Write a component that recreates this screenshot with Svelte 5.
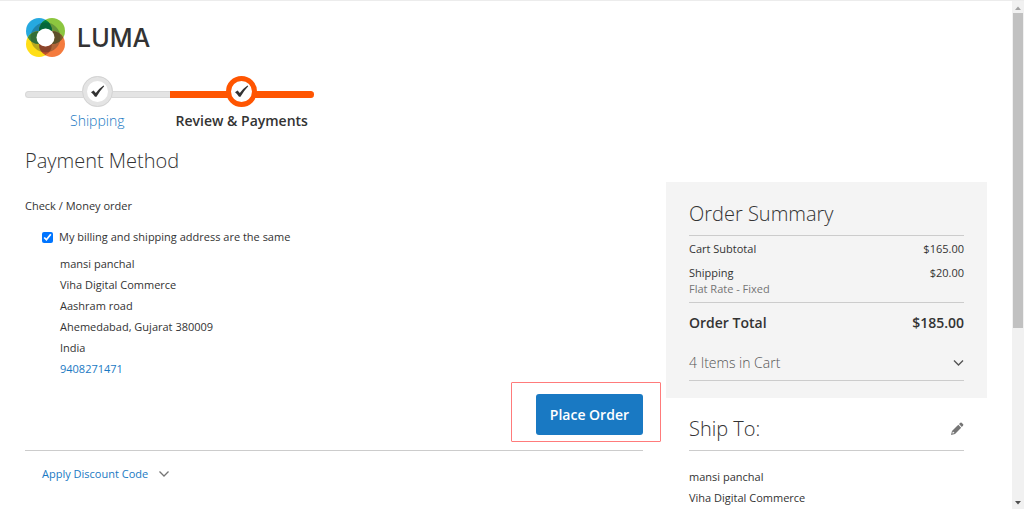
<script lang="ts">
	let sameAddress = true;

	const address = [
		'mansi panchal',
		'Viha Digital Commerce',
		'Aashram road',
		'Ahemedabad, Gujarat 380009',
		'India'
	];
	const phone = '9408271471';

	const steps = [
		{ label: 'Shipping', active: false },
		{ label: 'Review & Payments', active: true }
	];
</script>

<div class="viewport">
	<div class="page">
		<header>
			<a class="logo" href="/" aria-label="Luma">
				<svg width="40" height="40" viewBox="0 0 40 40" aria-hidden="true">
					<circle cx="14" cy="13" r="13" fill="#26a9e0" />
					<circle cx="27" cy="13" r="13" fill="#8cc63f" />
					<circle cx="27" cy="26" r="13" fill="#f47b3e" />
					<circle cx="14" cy="26" r="13" fill="#ffde17" />
					<path d="M20.5 1.7a13 13 0 0 1 0 22.6a13 13 0 0 1 0-22.6z" fill="#00813f" />
					<path d="M38.3 19.5a13 13 0 0 1-22.6 0a13 13 0 0 1 22.6 0z" fill="#7d6029" />
					<path d="M20.5 37.3a13 13 0 0 1 0-22.6a13 13 0 0 1 0 22.6z" fill="#c1502a" />
					<path d="M2.7 19.5a13 13 0 0 1 22.6 0a13 13 0 0 1-22.6 0z" fill="#438b3c" />
					<circle cx="20.5" cy="19.5" r="12" fill="none" stroke="#102c30" stroke-width="6" opacity=".3" />
					<circle cx="20.5" cy="19.5" r="9" fill="#fff" />
				</svg>
				<span>LUMA</span>
			</a>
		</header>

		<ol class="progress">
			{#each steps as step}
				<li class:active={step.active}>
					<span class="dot">
						<svg width="15" height="14" viewBox="0 0 15 14" aria-hidden="true">
							<path d="M1 7.2L3.6 5.6L5.8 8Q9 3.5 13.5 0.5L14.2 1.2Q10 5.5 6.5 11.8L5 11.8Q3.5 9 1 7.2z" fill="#333" />
						</svg>
					</span>
					{#if step.active}
						<span class="label">{step.label}</span>
					{:else}
						<a class="label" href="#shipping">{step.label}</a>
					{/if}
				</li>
			{/each}
		</ol>

		<div class="columns">
			<main>
				<h1>Payment Method</h1>
				<p class="method">Check / Money order</p>
				<div class="billing">
					<label class="same">
						<input type="checkbox" bind:checked={sameAddress} />
						My billing and shipping address are the same
					</label>
					<address>
						{#each address as line}
							<span>{line}</span>
						{/each}
						<a href="tel:{phone}">{phone}</a>
					</address>
				</div>
				<div class="actions">
					<div class="highlight">
						<button class="place" type="button">Place Order</button>
					</div>
				</div>
				<button class="discount" type="button">
					Apply Discount Code
					<svg width="12" height="8" viewBox="0 0 12 8" aria-hidden="true">
						<path d="M1.5 1.5L6 6L10.5 1.5" fill="none" stroke="#757575" stroke-width="1.3" />
					</svg>
				</button>
			</main>

			<aside>
				<section class="summary">
					<h2>Order Summary</h2>
					<table>
						<tbody>
							<tr>
								<th scope="row">Cart Subtotal</th>
								<td>$165.00</td>
							</tr>
							<tr class="shipping">
								<th scope="row">Shipping<span>Flat Rate - Fixed</span></th>
								<td>$20.00</td>
							</tr>
							<tr class="total">
								<th scope="row">Order Total</th>
								<td>$185.00</td>
							</tr>
						</tbody>
					</table>
					<button class="items" type="button">
						4 Items in Cart
						<svg width="11" height="8" viewBox="0 0 11 8" aria-hidden="true">
							<path d="M1 1.5L5.5 6L10 1.5" fill="none" stroke="#555" stroke-width="1.4" />
						</svg>
					</button>
				</section>

				<section class="ship-to">
					<div class="ship-title">
						<h2>Ship To:</h2>
						<button class="edit" type="button" aria-label="Edit">
							<svg width="14" height="14" viewBox="0 0 14 14" aria-hidden="true">
								<path d="M1 13L2 9L8.3 2.8L11.2 5.7L5 12z" fill="#757575" />
								<path d="M9 2.1L10.4 0.8Q11 0.3 11.6 0.8L13.1 2.3Q13.6 2.9 13.1 3.5L11.8 4.9z" fill="#757575" />
								<path d="M2.9 9.4L4.6 11.1L2.7 11.6L2.3 11.2z" fill="#fff" />
							</svg>
						</button>
					</div>
					<address>
						{#each address.slice(0, 2) as line}
							<span>{line}</span>
						{/each}
					</address>
				</section>
			</aside>
		</div>
	</div>

	<div class="scrollbar" aria-hidden="true">
		<svg width="12" height="12" viewBox="0 0 12 12">
			<path d="M3 9L6 5.5L9 9z" fill="#a3a3a3" />
		</svg>
		<div class="thumb"></div>
		<svg width="12" height="12" viewBox="0 0 12 12">
			<path d="M3 4L6 7.5L9 4z" fill="#505050" />
		</svg>
	</div>
</div>

<style>
	:global(body) {
		margin: 0;
		background: #fff;
	}

	.viewport {
		display: flex;
		box-sizing: border-box;
		height: 100vh;
		overflow: hidden;
		border-top: 1px solid #ececec;
		color: #333;
		font-family: 'Open Sans', sans-serif;
		font-size: 11px;
		line-height: 16px;
	}

	.page {
		flex: 1;
		padding: 17px 25px 0;
	}

	a {
		color: #1979c3;
		text-decoration: none;
	}

	button {
		padding: 0;
		border: 0;
		background: none;
		color: inherit;
		font: inherit;
		cursor: pointer;
	}

	h1,
	h2 {
		margin: 0;
		font-size: 20px;
		font-weight: 300;
		line-height: 28px;
	}

	.logo {
		display: inline-flex;
		align-items: center;
		gap: 12px;
		height: 40px;
		color: #333;
		font-family: Inter, sans-serif;
		font-size: 25px;
		font-weight: 500;
	}

	.logo svg {
		display: block;
	}

	.progress {
		display: flex;
		width: 289px;
		margin: 14px 0 0;
		padding: 0;
		list-style: none;
	}

	.progress li {
		position: relative;
		display: flex;
		flex: 1;
		flex-direction: column;
		align-items: center;
		gap: 4px;
	}

	.progress li::before {
		content: '';
		position: absolute;
		top: 15px;
		left: 0;
		right: 0;
		box-sizing: border-box;
		height: 7px;
		border: 1px solid #d8d8d8;
		border-right: 0;
		border-radius: 4px 0 0 4px;
		background: #e4e4e4;
	}

	.progress li.active::before {
		border-color: #ff5501;
		border-radius: 0 4px 4px 0;
		background: #ff5501;
	}

	.dot {
		position: relative;
		display: flex;
		align-items: center;
		justify-content: center;
		box-sizing: border-box;
		width: 31px;
		height: 31px;
		border: 5px solid #e4e4e4;
		border-radius: 50%;
		outline: 1px solid #d4d4d4;
		outline-offset: -1px;
		background: #fff;
	}

	.active .dot {
		border-color: #ff5501;
		outline: 0;
	}

	.label {
		font-size: 14px;
		font-weight: 300;
		line-height: 20px;
		white-space: nowrap;
	}

	.active .label {
		font-weight: 600;
	}

	.columns {
		display: flex;
		gap: 23px;
		margin-top: 16px;
	}

	main {
		flex: 1;
	}

	.method {
		margin: 23px 0 0;
	}

	.billing {
		padding: 15px 0 0 17px;
	}

	.same {
		display: flex;
		align-items: center;
		gap: 6px;
	}

	.same input {
		width: 11px;
		height: 11px;
		margin: 0;
		accent-color: #0075ff;
	}

	address {
		display: flex;
		flex-direction: column;
		align-items: flex-start;
		font-style: normal;
		line-height: 21px;
	}

	.billing address {
		margin: 8px 0 0 18px;
	}

	.actions {
		display: flex;
		justify-content: flex-end;
		padding: 15px 0;
		border-bottom: 1px solid #ccc;
	}

	.highlight {
		position: relative;
	}

	.highlight::after {
		content: '';
		position: absolute;
		inset: -12px -18px -7px -25px;
		border: 1px solid #ff7b7b;
		border-radius: 1px;
		pointer-events: none;
	}

	.place {
		display: block;
		padding: 10px 14px;
		border-radius: 3px;
		background: #1979c3;
		color: #fff;
		font-size: 14px;
		font-weight: 600;
		line-height: 21px;
	}

	.discount {
		display: flex;
		align-items: center;
		gap: 10px;
		padding: 15px 17px;
		color: #1979c3;
	}

	aside {
		width: 34%;
		max-width: 321px;
		margin-top: 35px;
	}

	.summary {
		padding: 18px 23px 17px;
		background: #f4f4f4;
	}

	.summary h2 {
		padding-bottom: 7px;
		border-bottom: 1px solid #ccc;
	}

	table {
		width: 100%;
		margin-top: 1px;
		border-collapse: collapse;
	}

	th,
	td {
		padding: 4px 0;
		font-weight: 400;
		text-align: left;
		vertical-align: top;
	}

	td {
		text-align: right;
	}

	th span {
		display: block;
		color: #757575;
	}

	.shipping th,
	.shipping td {
		padding-bottom: 5px;
		border-bottom: 1px solid #ccc;
	}

	.total th,
	.total td {
		padding: 10px 0;
		font-size: 14px;
		font-weight: 600;
		line-height: 20px;
	}

	.items {
		display: flex;
		align-items: center;
		justify-content: space-between;
		width: 100%;
		padding: 10px 0 7px;
		border-bottom: 1px solid #ccc;
		color: #555;
		font-size: 14px;
		font-weight: 300;
		line-height: 20px;
	}

	.ship-to {
		padding: 17px 23px 0;
	}

	.ship-title {
		display: flex;
		align-items: center;
		justify-content: space-between;
		padding-bottom: 7px;
		border-bottom: 1px solid #ccc;
	}

	.edit svg {
		display: block;
	}

	.ship-to address {
		padding-top: 15px;
	}

	.scrollbar {
		display: flex;
		flex-direction: column;
		justify-content: space-between;
		width: 12px;
		background: #f1f1f1;
	}

	.thumb {
		flex: 0 0 62%;
		width: 10px;
		margin: 0 1px auto;
		background: #c1c1c1;
	}
</style>
